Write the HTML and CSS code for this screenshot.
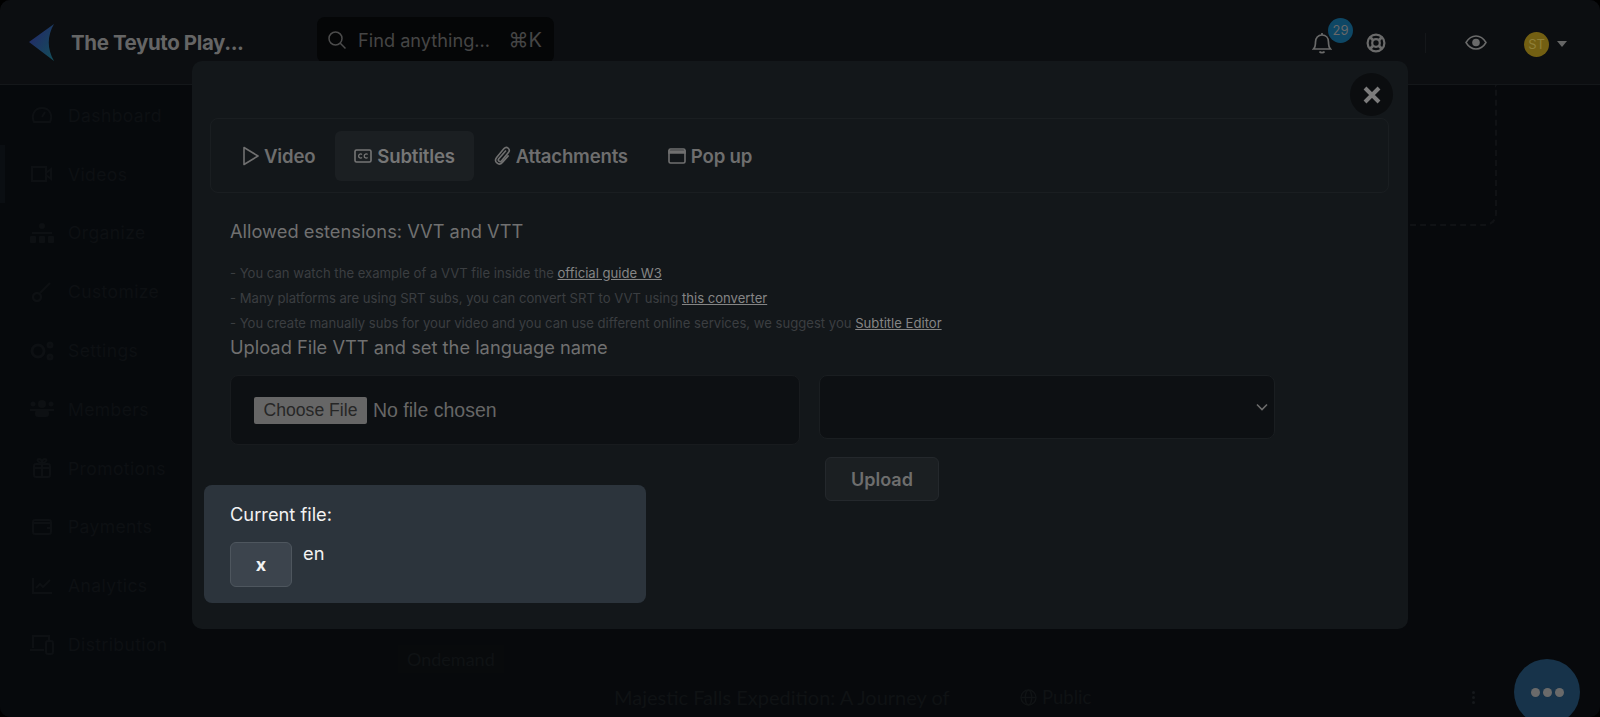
FILE: index.html
```html
<!DOCTYPE html>
<html lang="en">
<head>
    <meta charset="UTF-8">
    <meta name="viewport" content="width=device-width, initial-scale=1.0">
    <title>Subtitles</title>
    <link rel="stylesheet" href="styles.css">
</head>
<body>
    <div class="app">
        <header class="topbar">
            <div class="brand">
                <svg class="logo" width="26" height="38" viewBox="0 0 26 38">
                    <defs>
                        <linearGradient id="logoFill" x1="0" y1="0" x2="1" y2="1">
                            <stop offset="0" stop-color="#25246a"/>
                            <stop offset="1" stop-color="#134f5a"/>
                        </linearGradient>
                    </defs>
                    <path d="M0 18 L25 0 C18 12 18 25 25 37 Z" fill="url(#logoFill)"/>
                </svg>
                <span class="brand-name">The Teyuto Play...</span>
            </div>
            <div class="search">
                <svg width="20" height="20" viewBox="0 0 20 20" fill="none" stroke="#4c4c4c" stroke-width="1.5"><circle cx="8.5" cy="8.5" r="6.5"/><path d="M13.3 13.3 L18.5 18.5"/></svg>
                <span class="search-text">Find anything...</span>
                <span class="search-key">⌘K</span>
            </div>
            <div class="top-icons">
                <div class="bell">
                    <svg width="20" height="22" viewBox="0 0 20 22" fill="none" stroke="#6a6a6a" stroke-width="1.7"><path d="M1.5 17 C3.5 15 3.5 13 3.5 10 C3.5 6 6 3 10 3 C14 3 16.5 6 16.5 10 C16.5 13 16.5 15 18.5 17 Z"/><path d="M10 1 V3"/><path d="M7.5 19.5 C8.5 21 11.5 21 12.5 19.5"/></svg>
                    <span class="badge">29</span>
                </div>
                <svg class="help" width="20" height="20" viewBox="0 0 20 20" fill="none" stroke="#6a6a6a" stroke-width="2.2"><circle cx="10" cy="10" r="8.4"/><circle cx="10" cy="10" r="3.8"/><path d="M4 4 L7.4 7.4 M16 4 L12.6 7.4 M4 16 L7.4 12.6 M16 16 L12.6 12.6" stroke-width="2.8"/></svg>
                <span class="divider"></span>
                <svg class="eye" width="22" height="15" viewBox="0 0 22 15" fill="none" stroke="#6a6a6a" stroke-width="1.5"><path d="M1 7.5 C4 2.5 7.5 1 11 1 C14.5 1 18 2.5 21 7.5 C18 12.5 14.5 14 11 14 C7.5 14 4 12.5 1 7.5 Z"/><circle cx="11" cy="7.5" r="3.8" fill="#6a6a6a" stroke="none"/></svg>
                <span class="avatar">ST</span>
                <span class="caret"></span>
            </div>
        </header>

        <div class="layout">
            <nav class="sidebar">
                <span class="side-mark"></span>
                <a class="side-item"><svg width="22" height="18" viewBox="0 0 22 18" fill="none" stroke="#0d1013" stroke-width="2"><path d="M3 16 C0 10 3 2 11 2 C19 2 22 10 19 16 Z M11 11 L14 6"/></svg>Dashboard</a>
                <a class="side-item"><svg width="22" height="18" viewBox="0 0 22 18" fill="none" stroke="#0d1013" stroke-width="2"><rect x="1" y="2" width="14" height="14"/><path d="M15 8 L20 4 V14 L15 10"/></svg>Videos</a>
                <a class="side-item"><svg width="24" height="20" viewBox="0 0 24 20" fill="#0d1013"><circle cx="12" cy="3" r="3"/><rect x="0" y="13" width="6" height="7" rx="1"/><rect x="9" y="13" width="6" height="7" rx="1"/><rect x="18" y="13" width="6" height="7" rx="1"/><rect x="2" y="9" width="20" height="2"/></svg>Organize</a>
                <a class="side-item"><svg width="22" height="20" viewBox="0 0 22 20" fill="none" stroke="#0d1013" stroke-width="2.4"><path d="M19 1 L9 11"/><circle cx="6" cy="15" r="4"/></svg>Customize</a>
                <a class="side-item"><svg width="24" height="20" viewBox="0 0 24 20" fill="none" stroke="#0d1013" stroke-width="3"><circle cx="8" cy="10" r="6"/><circle cx="20" cy="4" r="2"/><circle cx="20" cy="16" r="2"/></svg>Settings</a>
                <a class="side-item"><svg width="24" height="18" viewBox="0 0 24 18" fill="#0d1013"><circle cx="12" cy="4" r="4"/><circle cx="3" cy="4" r="2.5"/><circle cx="21" cy="4" r="2.5"/><rect x="5" y="10" width="14" height="7" rx="3"/><rect x="0" y="9" width="24" height="2"/></svg>Members</a>
                <a class="side-item"><svg width="20" height="20" viewBox="0 0 20 20" fill="none" stroke="#0d1013" stroke-width="2"><rect x="2" y="6" width="16" height="13" rx="2"/><path d="M1 10 H19 M10 5 V19 M10 5 C6 5 4 1 7 1 C9 1 10 3 10 5 C10 3 11 1 13 1 C16 1 14 5 10 5"/></svg>Promotions</a>
                <a class="side-item"><svg width="20" height="18" viewBox="0 0 20 18" fill="none" stroke="#0d1013" stroke-width="2"><rect x="1" y="2" width="18" height="14" rx="2"/><path d="M1 5 H19 M15 10 H19"/></svg>Payments</a>
                <a class="side-item"><svg width="20" height="18" viewBox="0 0 20 18" fill="none" stroke="#0d1013" stroke-width="2"><path d="M1 1 V16 H20 M4 11 L8 7 L11 10 L18 3"/></svg>Analytics</a>
                <a class="side-item"><svg width="24" height="20" viewBox="0 0 24 20" fill="none" stroke="#0d1013" stroke-width="2"><path d="M3 13 V1 H19 V5 M0 15 H14"/><rect x="16" y="6" width="7" height="13" rx="2"/></svg>Distribution</a>
            </nav>

            <main class="content">
                <div class="dropzone"></div>
                <span class="tag">Ondemand</span>
                <div class="video-row">
                    <span class="video-title">Majestic Falls Expedition: A Journey of</span>
                    <span class="video-state"><svg width="17" height="17" viewBox="0 0 16 16" fill="none" stroke="#101315" stroke-width="1.4"><circle cx="8" cy="8" r="7"/><ellipse cx="8" cy="8" rx="3" ry="7"/><path d="M1 8 H15"/></svg>Public</span>
                    <span class="video-more"><i></i><i></i><i></i></span>
                </div>
            </main>
        </div>
    </div>

    <div class="modal">
        <button class="close-btn">
            <svg width="18" height="18" viewBox="0 0 18 18" stroke="#7c7c7c" stroke-width="4"><path d="M2 2 L16 16 M16 2 L2 16"/></svg>
        </button>

        <div class="tabs">
            <a class="tab">
                <svg width="16" height="20" viewBox="0 0 16 20" fill="none" stroke="#707070" stroke-width="1.6"><path d="M1 1.5 L15 10 L1 18.5 Z" stroke-linejoin="round"/></svg>
                Video
            </a>
            <a class="tab active">
                <svg width="18" height="14" viewBox="0 0 18 14" fill="none" stroke="#767676" stroke-width="1.6"><rect x="1" y="1" width="16" height="12" rx="1.5"/><path d="M8 5.4 C7 4.6 4.6 4.8 4.6 7 C4.6 9.2 7 9.4 8 8.6 M13.6 5.4 C12.6 4.6 10.2 4.8 10.2 7 C10.2 9.2 12.6 9.4 13.6 8.6" stroke-width="1.3"/></svg>
                Subtitles
            </a>
            <a class="tab">
                <svg width="17" height="20" viewBox="0 0 17 20" fill="none" stroke="#707070" stroke-width="1.6"><path d="M12 4.5 L4.8 12.8 C3.4 14.6 5.8 16.6 7.4 15 L14.4 6.6 C17 3.4 12.8 -0.4 10 2.6 L2.6 11.4 C-0.6 15.6 4.8 20.4 8.4 16.4 L14.6 9.4"/></svg>
                Attachments
            </a>
            <a class="tab">
                <svg width="18" height="16" viewBox="0 0 18 16" fill="none" stroke="#707070" stroke-width="1.6"><rect x="1" y="1" width="16" height="14" rx="1.5"/><path d="M1 3 H17 V5 H1 Z" fill="#707070"/></svg>
                Pop up
            </a>
        </div>

        <div class="modal-body">
            <h3 class="section-title first">Allowed estensions: VVT and VTT</h3>
            <p class="hint">- You can watch the example of a VVT file inside the <a>official guide W3</a></p>
            <p class="hint">- Many platforms are using SRT subs, you can convert SRT to VVT using <a>this converter</a></p>
            <p class="hint">- You create manually subs for your video and you can use different online services, we suggest you <a>Subtitle Editor</a></p>
            <h3 class="section-title">Upload File VTT and set the language name</h3>

            <div class="upload-row">
                <div class="upload-left">
                    <div class="file-box">
                        <span class="file-btn">Choose File</span>
                        <span class="file-name">No file chosen</span>
                    </div>
                    <div class="current-file">
                        <div class="current-title">Current file:</div>
                        <div class="current-item">
                            <button class="remove-btn">x</button>
                            <span class="current-lang">en</span>
                        </div>
                    </div>
                </div>
                <div class="upload-right">
                    <div class="lang-select">
                        <svg width="12" height="8" viewBox="0 0 12 8" fill="none" stroke="#6c6c6c" stroke-width="1.6"><path d="M1 1.5 L6 6.5 L11 1.5"/></svg>
                    </div>
                    <button class="upload-btn">Upload</button>
                </div>
            </div>
        </div>
    </div>

    <div class="chat-bubble">
        <span></span><span></span><span></span>
    </div>
</body>
</html>
```

FILE: styles.css
```css
body {
    margin: 0;
    height: 717px;
    overflow: hidden;
    background-color: #000;
    font-family: Inter, "Open Sans", sans-serif;
}
.app {
    height: 717px;
    background-color: #07090c;
    border-radius: 10px;
    overflow: hidden;
}
.topbar {
    display: flex;
    align-items: flex-start;
    height: 85px;
    box-sizing: border-box;
    background-color: #0c0e11;
    border-bottom: 1px solid #14171a;
}
.brand {
    display: flex;
    align-items: center;
    gap: 16px;
    width: 317px;
    height: 85px;
    box-sizing: border-box;
    padding-left: 29px;
    flex-shrink: 0;
}
.brand-name {
    color: #656565;
    font-size: 20.5px;
    font-weight: 700;
    letter-spacing: -0.4px;
}
.search {
    display: flex;
    align-items: center;
    width: 237px;
    height: 46px;
    margin-top: 17px;
    box-sizing: border-box;
    padding: 0 12px 0 10px;
    border-radius: 8px;
    background-color: #050607;
}
.search-text {
    margin-left: 11px;
    color: #454545;
    font-size: 18.2px;
}
.search-key {
    margin-left: auto;
    color: #454545;
    font-size: 20px;
}
.top-icons {
    display: flex;
    align-items: center;
    height: 85px;
    margin-left: auto;
    padding-right: 33px;
}
.bell {
    position: relative;
    display: flex;
    margin-right: 34px;
}
.badge {
    position: absolute;
    left: 16px;
    top: -14px;
    width: 25px;
    height: 25px;
    border-radius: 50%;
    background-color: #0e4765;
    color: #686868;
    font-size: 13px;
    line-height: 25px;
    text-align: center;
}
.divider {
    width: 1px;
    height: 20px;
    margin: 0 39px 0 39px;
    background-color: #15171a;
}
.avatar {
    width: 25px;
    height: 25px;
    margin: 3px 0 0 37px;
    border-radius: 50%;
    background-color: #735f12;
    color: #8f8038;
    font-size: 13px;
    line-height: 25px;
    text-align: center;
}
.caret {
    width: 0;
    height: 0;
    margin: 2px 0 0 8px;
    border-left: 5px solid transparent;
    border-right: 5px solid transparent;
    border-top: 6px solid #666;
}
.layout {
    display: flex;
    height: 632px;
}
.sidebar {
    position: relative;
    width: 180px;
    flex-shrink: 0;
    padding-top: 1px;
    background-color: #06090c;
}
.side-mark {
    position: absolute;
    left: 0;
    top: 60px;
    width: 5px;
    height: 58px;
    background-color: #0a0e12;
}
.side-item {
    display: flex;
    align-items: center;
    gap: 14px;
    height: 58.8px;
    padding-left: 30px;
    color: #0d1013;
    font-size: 17.5px;
    letter-spacing: 0.4px;
}
.side-item svg {
    width: 24px;
    flex-shrink: 0;
}
.content {
    flex: 1;
    padding-left: 218px;
}
.dropzone {
    width: 1099px;
    height: 141px;
    box-sizing: border-box;
    border: 2px dashed #101215;
    border-top: none;
    border-radius: 0 0 12px 12px;
}
.tag {
    display: inline-block;
    margin-top: 419px;
    padding: 3px 9px;
    background-color: #080a0c;
    color: #0f1214;
    font-family: Lato, sans-serif;
    font-size: 18px;
}
.video-row {
    display: flex;
    align-items: center;
    margin-top: 12px;
    padding-left: 216px;
    color: #0f1214;
    font-family: Lato, sans-serif;
    font-size: 20px;
}
.video-title {
    width: 406px;
}
.video-state {
    display: flex;
    align-items: center;
    gap: 5px;
    font-size: 18.5px;
}
.video-more {
    display: flex;
    flex-direction: column;
    gap: 2px;
    margin-left: 381px;
}
.video-more i {
    width: 3px;
    height: 3px;
    border-radius: 50%;
    background-color: #16191c;
}
.modal {
    position: absolute;
    left: 192px;
    top: 61px;
    width: 1216px;
    height: 568px;
    box-sizing: border-box;
    padding: 57px 19px 0 18px;
    border-radius: 10px;
    background-color: #13171a;
}
.close-btn {
    position: absolute;
    right: 15px;
    top: 12px;
    display: flex;
    align-items: center;
    justify-content: center;
    width: 43px;
    height: 43px;
    padding: 0;
    border: none;
    border-radius: 50%;
    background-color: #0b0d0f;
}
.tabs {
    display: flex;
    align-items: center;
    height: 75px;
    box-sizing: border-box;
    padding-left: 12px;
    border: 1px solid #1a1e21;
    border-radius: 8px;
}
.tab {
    display: flex;
    align-items: center;
    gap: 5px;
    height: 50px;
    padding: 0 20px;
    border-radius: 6px;
    color: #6e6e6e;
    font-size: 18.6px;
    font-weight: 600;
    letter-spacing: -0.2px;
}
.tab.active {
    padding: 0 19px;
    background-color: #1b1f22;
    color: #767676;
}
.modal-body {
    padding-left: 20px;
}
.section-title {
    margin: 0;
    color: #707070;
    font-size: 18.3px;
    font-weight: 400;
    line-height: 24px;
}
.section-title.first {
    margin: 26px 0 18px;
}
.hint {
    margin: 0;
    color: #3b3e41;
    font-size: 13.1px;
    line-height: 25px;
}
.hint + .section-title {
    margin-top: -1px;
}
.hint a {
    color: #858585;
    text-decoration: underline;
}
.upload-row {
    display: flex;
    gap: 19px;
    margin-top: 16px;
}
.upload-left {
    width: 570px;
}
.file-box {
    display: flex;
    align-items: center;
    height: 70px;
    box-sizing: border-box;
    padding: 0 0 0 23px;
    border: 1px solid #181b1e;
    border-radius: 8px;
    background-color: #0d1013;
}
.file-btn {
    width: 113px;
    height: 27px;
    background-color: #666;
    border-radius: 2px;
    color: #262626;
    font-family: "Liberation Sans", sans-serif;
    font-size: 17.6px;
    line-height: 27px;
    text-align: center;
}
.file-name {
    margin-left: 6px;
    color: #666;
    font-family: "Liberation Sans", sans-serif;
    font-size: 19.5px;
}
.current-file {
    width: 442px;
    height: 118px;
    box-sizing: border-box;
    margin: 40px 0 0 -26px;
    padding: 17px 26px;
    border-radius: 8px;
    background-color: #2c343c;
    color: #f2f2f2;
}
.current-title {
    font-size: 18.3px;
    line-height: 24px;
}
.current-item {
    display: flex;
    gap: 11px;
    margin-top: 16px;
}
.remove-btn {
    width: 62px;
    height: 45px;
    padding: 0;
    border: 1px solid #4e565e;
    border-radius: 6px;
    background-color: #3c444d;
    color: #f2f2f2;
    font-family: Inter, sans-serif;
    font-size: 18px;
    font-weight: 700;
}
.current-lang {
    font-size: 18.3px;
    line-height: 22px;
}
.upload-right {
    width: 456px;
}
.lang-select {
    display: flex;
    align-items: center;
    justify-content: flex-end;
    height: 64px;
    box-sizing: border-box;
    padding-right: 6px;
    border: 1px solid #1a1e21;
    border-radius: 8px;
    background-color: #0d1013;
}
.upload-btn {
    display: block;
    width: 114px;
    height: 44px;
    margin: 18px 0 0 6px;
    padding: 0;
    border: 1px solid #24282c;
    border-radius: 6px;
    background-color: #1b1f22;
    color: #6e6e6e;
    font-family: Inter, sans-serif;
    font-size: 18px;
    font-weight: 600;
}
.chat-bubble {
    position: absolute;
    left: 1514px;
    top: 659px;
    display: flex;
    align-items: center;
    justify-content: center;
    gap: 3px;
    width: 66px;
    height: 66px;
    border-radius: 50%;
    background-color: #17334a;
}
.chat-bubble span {
    width: 9px;
    height: 9px;
    border-radius: 50%;
    background-color: #6a6a6a;
}
```
